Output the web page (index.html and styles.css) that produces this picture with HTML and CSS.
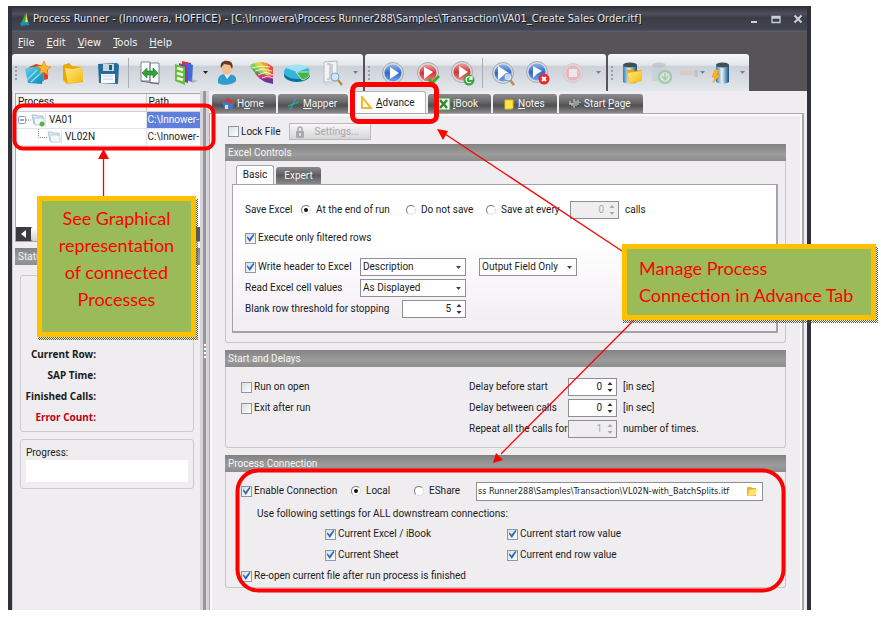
FILE: index.html
```html
<!DOCTYPE html>
<html lang="en">
<head>
<meta charset="utf-8">
<title>Process Runner</title>
<link rel="stylesheet" href="styles.css">
</head>
<body>
<svg class="defs" aria-hidden="true">
  <defs>
    <linearGradient id="blue" x1="0" y1="0" x2="0" y2="1"><stop offset="0" stop-color="#8fb4ea"/><stop offset=".5" stop-color="#2f68cf"/><stop offset="1" stop-color="#6fa4f0"/></linearGradient>
    <linearGradient id="red" x1="0" y1="0" x2="0" y2="1"><stop offset="0" stop-color="#eaa0a0"/><stop offset=".5" stop-color="#cf3636"/><stop offset="1" stop-color="#f08a8a"/></linearGradient>
    <linearGradient id="gold" x1="0" y1="0" x2="1" y2="1"><stop offset="0" stop-color="#ffe98a"/><stop offset="1" stop-color="#f5b800"/></linearGradient>
    <linearGradient id="cyan" x1="0" y1="0" x2="1" y2="1"><stop offset="0" stop-color="#5fd0ee"/><stop offset="1" stop-color="#0b86b8"/></linearGradient>
    <linearGradient id="steel" x1="0" y1="0" x2="1" y2="0"><stop offset="0" stop-color="#2d7fb5"/><stop offset=".45" stop-color="#e8f2f8"/><stop offset="1" stop-color="#0d4f86"/></linearGradient>
  </defs>
</svg>
<div class="window">
  <header class="titlebar">
    <svg class="logo" viewBox="0 0 12 16"><path d="M7 1 L9 11 L6 12Z" fill="#f1e22a"/><path d="M6 3 L6 12 L2 12Z" fill="#2aa35a"/><path d="M1 12 L10 11 L10 14 L2 15Z" fill="#1f86c8"/></svg>
    <h1>Process Runner - (Innowera, HOFFICE) - [C:\Innowera\Process Runner288\Samples\Transaction\VA01_Create Sales Order.itf]</h1>
    <div class="winbtns">
      <button type="button" aria-label="Minimize"><svg viewBox="0 0 10 10"><path d="M2 8H8" stroke="#c9d0dc" stroke-width="2"/></svg></button>
      <button type="button" aria-label="Restore"><svg viewBox="0 0 10 10"><path d="M1 2.500H9V8.500H1ZM1 4H9" stroke="#c9d0dc" stroke-width="1.300" fill="none"/></svg></button>
      <button type="button" aria-label="Close"><svg viewBox="0 0 10 10"><path d="M1.500 1.500 8.500 8.500M8.500 1.500 1.500 8.500" stroke="#c9d0dc" stroke-width="2"/></svg></button>
    </div>
  </header>
  <nav class="menubar">
    <a href="#"><u>F</u>ile</a><a href="#"><u>E</u>dit</a><a href="#"><u>V</u>iew</a><a href="#"><u>T</u>ools</a><a href="#"><u>H</u>elp</a>
  </nav>
  <div class="toolbars">
    <div class="toolbar files">
      <i class="grip"></i>
      <button type="button" aria-label="New"><svg viewBox="0 0 28 28"><path d="M5 8 12 5 24 8 24 20 12 23Z" fill="#d9412e"/><path d="M4 9 14 7 20 9 20 22 10 23Z" fill="#53b447"/><path d="M1 10 8 8 16 9 20 13 18 25 4 24Z" fill="url(#cyan)"/><path d="M3 21 13 11M7 23 18 13" stroke="#8fe0f2" stroke-width="1.200"/><path d="M20 2 22 7 27 8 23 11 24 16 20 13 15 15 17 10 13 7 18 7Z" fill="#ffb52e" stroke="#e98c12" stroke-width=".7"/></svg></button>
      <button type="button" aria-label="Open"><svg viewBox="0 0 28 28"><path d="M4 6 10 4 13 7 23 8 24 23 8 25 4 21Z" fill="#e9a900"/><path d="M6 9 14 10 23 8 24 22 9 25Z" fill="url(#gold)"/></svg></button>
      <button type="button" aria-label="Save"><svg viewBox="0 0 28 28"><path d="M4 5 23 4 25 6 24 25 5 24Z" fill="#236c9d"/><path d="M9 5H20V12H9Z" fill="#c9d6df"/><path d="M15 6H18V11H15Z" fill="#2a5878"/><path d="M7 15H21V24H7Z" fill="#f7f9fa"/><path d="M9 17H19M9 20H19" stroke="#bcd" stroke-width="1"/></svg></button>
      <i class="sep"></i>
      <button type="button" aria-label="Map"><svg viewBox="0 0 28 28"><path d="M5 3H14V22H5ZM14 4H23V24H14Z" fill="#fafbfc" stroke="#7e868c"/><path d="M5 22 23 25" stroke="#667"/><path d="M6 14 11 9V12H17V9L22 14 17 19V16H11V19Z" fill="#2fa538" stroke="#1b7d27" stroke-width=".6"/></svg></button>
      <button type="button" aria-label="Templates"><svg viewBox="0 0 28 28"><path d="M11 2 20 4 20 22 11 19Z" fill="#d63324"/><path d="M14 3 22 6 21 23 13 20Z" fill="#4568d8"/><path d="M8 4 17 7 17 24 8 21Z" fill="#8b3ab0"/><path d="M4 5 14 8 14 26 4 22Z" fill="#63c235"/><path d="M6 9 12 11M6 14 12 16M6 19 12 21" stroke="#f4fff0" stroke-width="2.500"/><path d="M20 20 27 22 21 24Z" fill="#8d959d" opacity=".6"/></svg></button>
      <i class="caret dark"></i>
      <button type="button" aria-label="User"><svg viewBox="0 0 28 28"><path d="M5 24C4 16 9 15 14 15 20 15 24 17 23 22 20 26 9 27 5 24Z" fill="#2f9ccb"/><path d="M11 15 14 20 18 15Z" fill="#e5f3f9"/><ellipse cx="14" cy="9" rx="5" ry="7" fill="#f2bd92"/><path d="M8 9C6 2 13 0 18 3 20 5 20 8 19 10L17 6 11 5Z" fill="#6b3a20"/></svg></button>
      <button type="button" aria-label="Colors"><svg viewBox="0 0 28 28"><path d="M2 6 6 4 25 22 21 24Z" fill="#8ccf4d"/><path d="M2 7 9 17 25 23Z" fill="#3fae49"/><path d="M6 4 13 3 25 22Z" fill="#ddd23a"/><path d="M13 3 19 4 25 22Z" fill="#f0a02c"/><path d="M19 4 25 8 25 22Z" fill="#e2523a"/><path d="M7 14 11 19 25 23 25 17Z" fill="#d63a7c"/><path d="M11 19 17 23 25 25 25 20Z" fill="#6f3596"/><path d="M4 9 13 7 22 8M7 12 15 10 24 12M10 16 18 13 25 16M14 19 20 17 25 19" stroke="#fff" fill="none" stroke-width=".8"/></svg></button>
      <button type="button" aria-label="Chart"><svg viewBox="0 0 28 28"><ellipse cx="14" cy="16" rx="13" ry="7" fill="#08729c"/><ellipse cx="14" cy="13" rx="13" ry="7" fill="#35b5dc"/><path d="M14 13 3 9C8 5 18 4 25 9Z" fill="#9fe2f4"/><path d="M13 13 27 13C27 17 24 20 19 21Z" fill="#46b63e" stroke="#d9f3e0" stroke-width=".8"/></svg></button>
      <button type="button" aria-label="Log"><svg viewBox="0 0 28 28"><path d="M6 3 19 2 19 22 6 23Z" fill="#f1f3f5" stroke="#b5bac0"/><path d="M9 5H12V20H9M14 5V20" stroke="#bfc5cb" stroke-width="1.500" fill="none"/><path d="M4 23 14 21 17 24 7 26Z" fill="#d3d7db"/><path d="M20 21 24 26" stroke="#c08a45" stroke-width="2.500"/><circle cx="17" cy="18" r="4" fill="#cfe7f6" stroke="#85a6bc"/></svg></button>
      <i class="caret last"></i>
    </div>
    <div class="toolbar run">
      <i class="grip"></i>
      <button type="button" aria-label="Run"><svg viewBox="0 0 28 28"><circle cx="14" cy="14" r="10.500" fill="#d7dade" stroke="#a7abb2"/><circle cx="14" cy="14" r="8.500" fill="url(#blue)"/><path d="M11 8 20 14 11 20Z" fill="#fff"/></svg></button>
      <button type="button" aria-label="Run and validate"><svg viewBox="0 0 28 28"><circle cx="14" cy="14" r="10.500" fill="#d7dade" stroke="#b3a7a9"/><circle cx="14" cy="14" r="8.500" fill="url(#red)"/><path d="M10 8 19 13 10 20Z" fill="#fff"/><path d="M15 20 18 24 25 17" stroke="#3cab28" stroke-width="3" fill="none"/></svg></button>
      <button type="button" aria-label="Run again"><svg viewBox="0 0 28 28"><circle cx="13" cy="13" r="10.500" fill="#d7dade" stroke="#b3a7a9"/><circle cx="13" cy="13" r="8.500" fill="url(#red)"/><path d="M10 7 19 13 10 19Z" fill="#fff"/><circle cx="20" cy="21" r="5.500" fill="#36a83c"/><path d="M23 20A3 3 0 1 0 22 23M23 17V20H20" stroke="#fff" stroke-width="1.300" fill="none"/></svg></button>
      <i class="sep"></i>
      <button type="button" aria-label="Debug"><svg viewBox="0 0 28 28"><circle cx="14" cy="14" r="10.500" fill="#d7dade" stroke="#a7abb2"/><circle cx="14" cy="14" r="8.500" fill="url(#blue)"/><path d="M9 7 20 14 15 16 9 21Z" fill="#fff"/><path d="M21 21 25 26" stroke="#c08a45" stroke-width="2.500"/><circle cx="19" cy="18" r="4" fill="#dceefa" fill-opacity=".8" stroke="#7c98b4"/></svg></button>
      <button type="button" aria-label="Stop debug"><svg viewBox="0 0 28 28"><circle cx="13" cy="13" r="10.500" fill="#d7dade" stroke="#a7abb2"/><circle cx="13" cy="13" r="8.500" fill="url(#blue)"/><path d="M9 7 18 12 13 15 9 19Z" fill="#fff"/><circle cx="20" cy="20" r="5.500" fill="#dd2f2f"/><path d="M18 18 22 22M22 18 18 22" stroke="#fff" stroke-width="2"/></svg></button>
      <button type="button" aria-label="Stop" disabled><svg viewBox="0 0 28 28"><circle cx="14" cy="14" r="9.500" fill="#e6d3d8" stroke="#d3c6cd"/><circle cx="14" cy="14" r="7.500" fill="#e3b9bf"/><path d="M10 10H18V18H10Z" fill="#eee6ea"/></svg></button>
      <i class="caret last"></i>
    </div>
    <div class="toolbar data">
      <i class="grip"></i>
      <button type="button" aria-label="Open data"><svg viewBox="0 0 28 28"><path d="M4 6V23C7 25 15 25 18 23V6Z" fill="url(#steel)"/><ellipse cx="11" cy="6" rx="7" ry="2.500" fill="#3f4e59"/><path d="M8 11 13 10 15 12 23 11 23 21 10 25Z" fill="#e9a900"/><path d="M9 14 23 12 23 22 10 25Z" fill="url(#gold)"/></svg></button>
      <button type="button" aria-label="Refresh data" disabled><svg viewBox="0 0 28 28" opacity=".55"><path d="M4 6V22H14V6Z" fill="#c4cbd1"/><ellipse cx="11" cy="6" rx="7" ry="2.500" fill="#aeb7be"/><circle cx="17" cy="18" r="6" fill="#e4efe4" stroke="#7cc088" stroke-width="2.500"/><path d="M17 14V20M14 17 17 21 20 17" stroke="#7cc088" stroke-width="1.500" fill="none"/></svg></button>
      <button type="button" aria-label="Link data" disabled><svg viewBox="0 0 28 28" opacity=".6"><path d="M3 12H16V16H3Z" fill="#e0c3b0"/><path d="M17 11H21V18H17Z" fill="#b5bbc1"/></svg></button>
      <i class="caret tight"></i>
      <button type="button" aria-label="Execute data"><svg viewBox="0 0 28 28"><path d="M8 6V23C11 25 18 25 21 23V6Z" fill="url(#steel)"/><ellipse cx="14.500" cy="6" rx="6.500" ry="2.500" fill="#3f4e59"/><path d="M7 11 4 18H7L5 24 12 16H9L11 11Z" fill="#ffb619" stroke="#ef9313" stroke-width=".6"/></svg></button>
      <i class="caret last"></i>
    </div>
  </div>
  <div class="main">
    <aside class="side">
      <div class="tree">
        <table>
          <thead><tr><th class="proc">Process</th><th>Path</th></tr></thead>
          <tbody>
            <tr><td><div class="node"><svg class="branch" viewBox="0 0 13 16"><rect x=".5" y="4.500" width="7" height="7" rx="1" fill="#fff" stroke="#7f95c4"/><path d="M2 8H6" stroke="#38508c"/><path d="M8 8H13" stroke="#888" stroke-dasharray="1 1"/></svg><svg class="folder" viewBox="0 0 14 16"><path d="M1 3H5L6 4H12V12H3Z" fill="#dbe9ef" stroke="#a5bcc8"/><path d="M3 6H13V13H4Z" fill="#f2f8fa" stroke="#9fb8c4" stroke-width=".7"/><circle cx="11" cy="12" r="2.500" fill="#55b548"/></svg><span>VA01</span></div></td><td class="sel">C:\Innower-</td></tr>
            <tr><td><div class="node child"><svg class="branch" viewBox="0 0 13 16"><path d="M4.500 0V8.500H13" stroke="#888" fill="none" stroke-dasharray="1 1"/></svg><svg class="folder" viewBox="0 0 14 16"><path d="M1 3H5L6 4H12V12H3Z" fill="#dbe9ef" stroke="#b5c8d2"/><path d="M3 6H13V13H4Z" fill="#f2f8fa" stroke="#afc4ce" stroke-width=".7"/></svg><span>VL02N</span></div></td><td>C:\Innower-</td></tr>
          </tbody>
        </table>
        <div class="hscroll"><button type="button" aria-label="Scroll left"><svg viewBox="0 0 8 8"><path d="M6 0V8L1 4Z" fill="#fff"/></svg></button><i></i></div>
      </div>
      <h2 class="bar">Status</h2>
      <div class="status">
        <dl><dt>Current Row:</dt><dt>SAP Time:</dt><dt>Finished Calls:</dt><dt class="err">Error Count:</dt></dl>
      </div>
      <div class="progress"><label for="prog">Progress:</label><progress id="prog" value="0" max="100"></progress></div>
    </aside>
    <div class="splitter"><i></i></div>
    <section class="work">
      <nav class="tabs">
        <button type="button" class="home"><svg viewBox="0 0 14 14"><path d="M1 6 6 1 13 6 11 12 4 12Z" fill="#3f79c9"/><path d="M1 6 7 1 13 5 9 7 5 4Z" fill="#d8382c"/><path d="M4 8H7V12H4Z" fill="#f3d9b0"/></svg><span>H<u>o</u>me</span></button>
        <button type="button" class="mapper"><svg viewBox="0 0 14 14"><path d="M1 9 12 5" stroke="#2bb04b" stroke-width="1.500"/><path d="M3 13 9 1" stroke="#3b8fd8" stroke-width="1.500"/></svg><span><u>M</u>apper</span></button>
        <button type="button" class="advance on"><svg viewBox="0 0 14 14"><path d="M2 1V12H11Z" fill="none" stroke="#f0b92c" stroke-width="2"/></svg><span><u>A</u>dvance</span></button>
        <button type="button" class="ibook"><svg viewBox="0 0 14 14"><path d="M1 1H13V13H1Z" fill="#f0f7ee" stroke="#4d9a48"/><path d="M3 3 10 11M10 3 3 11" stroke="#2f8a35" stroke-width="2.500"/></svg><span><u>i</u>Book</span></button>
        <button type="button" class="notes"><svg viewBox="0 0 14 14"><path d="M3 3H11V11L9 12H3Z" fill="#ffe34a" stroke="#e6bf1c"/></svg><span><u>N</u>otes</span></button>
        <button type="button" class="start"><svg viewBox="0 0 14 14"><path d="M2 4V7M4 6V9M6 2V11M8 4V9M10 3V8M12 5V6M1 7H5" stroke="#d6d6d6" stroke-width="1" fill="none"/></svg><span>Start <u>P</u>age</span></button>
      </nav>
      <div class="page">
        <div class="lockrow">
          <label class="check"><input type="checkbox">Lock File</label>
          <button type="button" class="settings" disabled><svg viewBox="0 0 10 14"><path d="M3 6V4A2 2 0 0 1 7 4V6" fill="none" stroke="#aaa" stroke-width="1.500"/><rect x="1" y="6" width="8" height="7" rx="1" fill="#aaa"/><path d="M5 8V11" stroke="#eee" stroke-width="1.500"/></svg>Settings...</button>
        </div>
        <section class="group">
          <h2 class="bar">Excel Controls</h2>
          <div class="excel">
            <nav class="subtabs"><button type="button" class="on">Basic</button><button type="button">Expert</button></nav>
            <div class="pane">
              <div class="row saverow">
                <span class="cap">Save Excel</span>
                <label class="check atend"><input type="radio" name="save" checked>At the end of run</label>
                <label class="check nosave"><input type="radio" name="save">Do not save</label>
                <label class="check every"><input type="radio" name="save">Save at every</label>
                <div class="spin off"><input type="text" value="0" aria-label="Calls between saves" disabled><svg viewBox="0 0 8 14"><path d="M1.500 5 4 2 6.500 5ZM1.500 9 4 12 6.500 9Z"/></svg></div>
                <span class="unit">calls</span>
              </div>
              <div class="row execrow"><label class="check"><input type="checkbox" checked>Execute only filtered rows</label></div>
              <div class="row formrow">
                <label class="check lead"><input type="checkbox" checked>Write header to Excel</label>
                <select class="field" aria-label="Header content"><option>Description</option></select>
                <select class="output" aria-label="Header fields"><option>Output Field Only</option></select>
              </div>
              <div class="row formrow"><label class="lead" for="readas">Read Excel cell values</label><select id="readas" class="field"><option>As Displayed</option></select></div>
              <div class="row formrow"><label class="lead blank" for="blank">Blank row threshold for stopping</label><div class="spin wide"><input id="blank" type="text" value="5"><svg viewBox="0 0 8 14"><path d="M1.500 5 4 2 6.500 5ZM1.500 9 4 12 6.500 9Z"/></svg></div></div>
            </div>
          </div>
        </section>
        <section class="group">
          <h2 class="bar">Start and Delays</h2>
          <div class="delays">
            <div class="opts">
              <label class="check"><input type="checkbox">Run on open</label>
              <label class="check"><input type="checkbox">Exit after run</label>
            </div>
            <div class="times">
              <label for="d1">Delay before start</label><div class="spin"><input id="d1" type="text" value="0"><svg viewBox="0 0 8 14"><path d="M1.500 5 4 2 6.500 5ZM1.500 9 4 12 6.500 9Z"/></svg></div><span>[in sec]</span>
              <label for="d2">Delay between calls</label><div class="spin"><input id="d2" type="text" value="0"><svg viewBox="0 0 8 14"><path d="M1.500 5 4 2 6.500 5ZM1.500 9 4 12 6.500 9Z"/></svg></div><span>[in sec]</span>
              <label for="d3">Repeat all the calls for</label><div class="spin off"><input id="d3" type="text" value="1" disabled><svg viewBox="0 0 8 14"><path d="M1.500 5 4 2 6.500 5ZM1.500 9 4 12 6.500 9Z"/></svg></div><span>number of times.</span>
            </div>
          </div>
        </section>
        <section class="group">
          <h2 class="bar">Process Connection</h2>
          <div class="conn">
            <div class="row connrow">
              <label class="check enable"><input type="checkbox" checked>Enable Connection</label>
              <label class="check local"><input type="radio" name="where" checked>Local</label>
              <label class="check eshare"><input type="radio" name="where">EShare</label>
              <div class="path"><input type="text" aria-label="Connected file" value="ss Runner288\Samples\Transaction\VL02N-with_BatchSplits.itf"><button type="button" aria-label="Browse"><svg viewBox="0 0 12 12"><path d="M1 2H5L6 3H10V11H1Z" fill="#e9b322"/><path d="M3 5 11 4 10 10 2 11Z" fill="#ffe27a"/></svg></button></div>
            </div>
            <p>Use following settings for ALL downstream connections:</p>
            <div class="grid2">
              <label class="check"><input type="checkbox" checked>Current Excel / iBook</label>
              <label class="check"><input type="checkbox" checked>Current start row value</label>
              <label class="check"><input type="checkbox" checked>Current Sheet</label>
              <label class="check"><input type="checkbox" checked>Current end row value</label>
            </div>
            <label class="check reopen"><input type="checkbox" checked>Re-open current file after run process is finished</label>
          </div>
        </section>
      </div>
    </section>
  </div>
</div>
<svg class="marks" viewBox="0 0 881 617" aria-hidden="true">
  <g fill="none" stroke="#f00">
    <rect x="14.500" y="105.500" width="199" height="43" rx="8" stroke-width="4"/>
    <rect x="352.500" y="84.500" width="84" height="37" rx="6" stroke-width="5"/>
    <rect x="237.500" y="470.500" width="546" height="120" rx="21" stroke-width="4"/>
    <path d="M103.500 197V158M622 251 445 134M634 320 501 454" stroke-width="1.300"/>
  </g>
  <path d="M103.500 149 109 159H98ZM437 129 448 131 443 140ZM493 463 496 453 503 460Z" fill="#f00"/>
</svg>
<aside class="note graph">See Graphical<br>representation<br>of connected<br>Processes</aside>
<aside class="note manage">Manage Process<br>Connection in Advance Tab</aside>
</body>
</html>
```
FILE: styles.css
```css
* { box-sizing: border-box; }
body {
  margin: 0;
  position: relative;
  background: #fff;
  color: #1c1c1c;
  font: 10px/14px Roboto, "Liberation Sans", sans-serif;
}
button, input, select { font: inherit; color: inherit; margin: 0; padding: 0; }
button { border: 0; background: none; }
h1, h2, p, dl { margin: 0; font-weight: normal; font-size: inherit; }
.defs { position: absolute; width: 0; height: 0; }

.window {
  display: flex;
  flex-direction: column;
  min-height: calc(100vh - 13px);
  margin: 6px 70px 7px 8px;
  border: solid #30313b;
  border-width: 0 4px;
  background: #565458;
}
.titlebar {
  display: flex;
  align-items: center;
  height: 26px;
  padding: 0 4px 0 7px;
  background: linear-gradient(#2e3038, #4c505b 30%, #3a3c46 45%, #42454f 90%, #5c6078);
  color: #e6e6ea;
}
.logo { width: 12px; height: 16px; margin-right: 2px; }
.titlebar h1 { flex: 1; white-space: nowrap; font: 11px/16px "DejaVu Sans Condensed", sans-serif; text-shadow: 1px 1px #15161c; }
.winbtns { display: flex; gap: 12px; }
.winbtns button { width: 10px; height: 10px; }
.winbtns svg { display: block; }
.menubar { display: flex; gap: 12px; height: 22px; padding: 3px 6px; }
.menubar a { color: #f1f1f1; text-decoration: none; font: 11px/16px "DejaVu Sans Condensed", sans-serif; }

.toolbars { display: flex; gap: 2px; height: 37px; }
.toolbar {
  display: flex;
  align-items: center;
  border-radius: 3px 3px 0 0;
  background: linear-gradient(#f8f8fa, #e2e5ea 30%, #ccd1d8 34%, #d6dae0 60%, #e2e7ec);
}
.toolbar button { flex: none; width: 35px; height: 28px; display: grid; place-items: center; }
.toolbar svg { width: 28px; height: 28px; }
.toolbar .grip { width: 2px; height: 14px; margin: 0 5px 0 3px; background: repeating-linear-gradient(#9aa0a8 0 2px, transparent 2px 4px); }
.sep { width: 1px; height: 30px; margin: 0 3px; background: #a9b0b9; }
.run .sep { margin: 0 2px; }
.caret { width: 5px; height: 3px; margin: 0 1px; background: #7b808a; clip-path: polygon(0 0, 100% 0, 50% 100%); }
.caret.dark { background: #222; }
.files .grip { margin-right: 3px; }
.files .last { margin: 0 5px 0 4px; }
.run .last { margin: 0 5px 0 6px; }
.data button { width: 29px; }
.data .last { margin: 0 4px; }
.data .tight { margin: 0 2px 0 -5px; }

.main { flex: 1; display: flex; background: #efedf0; }
.side { width: 188px; flex: none; padding: 2px 0 0 2px; border-left: 1px solid #cfccd2; }
.tree { height: 149px; display: flex; flex-direction: column; border: 1px solid #a8a8ac; border-right: 0; background: #fff; }
.tree table { width: 100%; table-layout: fixed; border-collapse: collapse; }
.tree th { height: 17px; padding: 0 2px; font-weight: normal; text-align: left; background: #f5f4f6; border: solid #d0ced2; border-width: 0 0 1px 1px; }
.tree .proc { width: 130px; border-left: 0; }
.tree td { height: 17px; padding: 0; border: solid #dfe4ee; border-width: 0 0 1px 1px; white-space: nowrap; }
.tree td:first-child { border-left: 0; padding-left: 2px; }
.tree td + td { padding-left: 1px; }
.tree .sel { background: #5f7fdc; color: #fff; }
.node { display: flex; align-items: center; }
.node.child { padding-left: 16px; }
.branch { width: 13px; height: 16px; }
.folder { width: 14px; height: 16px; }
.node span { padding-left: 3px; border-left: 1px solid #dfe4ee; }
.hscroll { display: flex; height: 14px; margin-top: auto; background: #58585c; }
.hscroll button { width: 15px; background: #3b3b40; display: grid; place-items: center; }
.hscroll svg { width: 8px; height: 8px; }
.hscroll i { width: 130px; background: linear-gradient(#fff, #d2d2d6); border-radius: 2px; }
.bar { height: 17px; padding: 0 3px; background: linear-gradient(#828282, #9c9c9c 60%, #8c8c8c); color: #f4f4f4; line-height: 17px; }
.side .bar { margin-top: 6px; }
.status { height: 157px; margin: 10px 6px 0 5px; padding-top: 68px; border: 1px solid #cbc9ce; border-radius: 3px; }
.status dl { width: 75px; font: bold 10px/21px "Noto Sans", sans-serif; white-space: nowrap; }
.status dt { display: flex; justify-content: flex-end; }
.err { color: #c00010; }
.progress { display: flex; flex-direction: column; margin: 7px 6px 0 5px; padding: 6px 5px; border: 1px solid #cbc9ce; border-radius: 3px; }
progress { appearance: none; width: 100%; height: 22px; border: 0; background: #fff; }
progress::-webkit-progress-bar { background: #fff; }
.splitter { width: 9px; flex: none; display: grid; place-items: center; background: linear-gradient(90deg, #d6d4d8 0 3px, #98979b 3px 6px, #d6d4d8 6px); }
.splitter i { width: 2px; height: 14px; background: repeating-linear-gradient(#fff 0 2px, transparent 2px 4px); }

.work { flex: 1; min-width: 0; display: flex; flex-direction: column; }
.tabs { display: flex; align-items: flex-end; gap: 2px; height: 22px; padding-left: 3px; }
.tabs button {
  display: flex;
  align-items: center;
  gap: 2px;
  height: 19px;
  padding: 0 6px 0 9px;
  border-radius: 3px 3px 0 0;
  background: linear-gradient(#8b8b8b, #6a6a6c 40%, #4f4f52 60%, #8a8a8c);
  color: #f5f5f5;
  white-space: nowrap;
}
.tabs svg { width: 14px; height: 14px; flex: none; }
.tabs .on { height: 22px; background: #fff; color: #222; border: 1px solid #b5b3b8; border-bottom: 0; }
.home { width: 64px; }
.mapper { width: 70px; }
.advance { width: 76px; }
.ibook { width: 63px; }
.notes { width: 64px; }
.start { width: 84px; }
.page { flex: 1; margin: 0 3px 0 0; padding: 9px 16px 0 15px; border: 1px solid #aaa8ac; border-width: 1px 2px 0 1px; box-shadow: inset 2px 2px #fafafa, inset -2px 0 #fafafa; display: flex; flex-direction: column; gap: 7px; }
.lockrow { display: flex; align-items: center; height: 17px; gap: 8px; padding-left: 3px; margin-bottom: -3px; }
.settings { display: flex; align-items: center; gap: 10px; width: 82px; height: 17px; padding-left: 5px; border: 1px solid #bab8bc; background: linear-gradient(#f7f7f7, #d6d4d8); color: #a8a6aa; }
.settings svg { width: 10px; height: 14px; }

.check { display: flex; align-items: center; gap: 2px; white-space: nowrap; }
.check input { appearance: none; flex: none; width: 11px; height: 11px; border: 1px solid #8b98a8; background: linear-gradient(135deg, #dcdcdc, #fff); display: grid; place-items: center; }
.check input[type="checkbox"]:checked::before { content: ""; width: 8px; height: 8px; background: #2468c0; clip-path: polygon(0 40%, 15% 30%, 38% 60%, 85% 0, 100% 10%, 42% 100%); }
.check input[type="radio"] { width: 10px; height: 10px; border-radius: 50%; border-color: #777 #ddd #ddd #777; background: #fff; }
.check input[type="radio"]:checked::before { content: ""; width: 4px; height: 4px; border-radius: 50%; background: #111; }

.group { border: 1px solid #c9c7cc; border-top: 0; border-radius: 0 0 3px 3px; }
.group > .bar { margin: 0 -1px; }
.excel { padding: 4px 7px 9px 6px; }
.subtabs { display: flex; align-items: flex-end; gap: 2px; height: 19px; padding-left: 4px; }
.subtabs button { height: 17px; width: 45px; border-radius: 3px 3px 0 0; background: linear-gradient(#8b8b8b, #5c5c5e 50%, #8a8a8c); color: #f5f5f5; }
.subtabs .on { height: 19px; width: 38px; background: #fff; color: #222; border: 1px solid #a5a3a8; border-bottom: 0; }
.pane { height: 149px; padding: 16px 10px 0 12px; border: 1px solid #a5a3a8; border-width: 1px 2px 2px 1px; background: linear-gradient(#fff 40%, #f2ecf3); }
.row { display: flex; align-items: center; }
.saverow { height: 17px; }
.cap { width: 56px; }
.saverow .check, .connrow .check { gap: 5px; }
.saverow .atend { width: 105px; }
.saverow .nosave { width: 80px; }
.saverow .every { width: 84px; }
.unit { margin-left: 6px; }
.execrow { height: 14px; margin: 13px 0; }
.formrow { height: 18px; margin-bottom: 3px; }
.lead { width: 115px; white-space: nowrap; }
.blank { width: 157px; }
select { appearance: none; height: 18px; padding: 0 14px 0 2px; border: 1px solid #8f8f93; border-radius: 0; background: #fff url("data:image/svg+xml,%3Csvg xmlns='http://www.w3.org/2000/svg' width='5' height='3'%3E%3Cpath d='M0 0H5L2.500 3Z' fill='%23444'/%3E%3C/svg%3E") no-repeat right 4px center; }
.field { width: 106px; }
.output { width: 98px; margin-left: 13px; }
.spin { display: flex; align-items: center; width: 49px; height: 18px; padding-right: 2px; border: 1px solid #8f8f93; background: #fff; }
.spin.wide { width: 64px; }
.spin input { flex: 1; min-width: 0; width: 20px; border: 0; background: none; text-align: right; padding-right: 4px; }
.spin svg { width: 8px; height: 14px; fill: #333; }
.spin.off { background: #efedf0; color: #aaa; }
.spin.off svg { fill: #aaa; }
.delays { display: flex; padding: 11px 14px 9px; }
.opts { width: 229px; display: flex; flex-direction: column; gap: 7px; padding: 2px 0 0 1px; }
.times { display: grid; grid-template-columns: 99px 49px auto; row-gap: 3px; align-items: center; white-space: nowrap; }
.times span { padding-left: 6px; }
.conn { padding: 9px 14px 4px 15px; }
.connrow { height: 20px; }
.enable { width: 110px; }
.connrow .enable { gap: 2px; }
.local { width: 63px; }
.eshare { width: 63px; }
.path { display: flex; align-items: center; width: 287px; height: 19px; margin-left: -1px; padding: 0 4px 0 1px; border: 1px solid #8f8f93; background: #fff; }
.path input { flex: 1; min-width: 0; border: 0; background: none; font: 9px/14px "DejaVu Sans Condensed", sans-serif; }
.path button { width: 12px; height: 12px; }
.path svg { display: block; }
.conn p { padding: 6px 0 6px 16px; }
.grid2 { display: grid; grid-template-columns: 182px auto; row-gap: 7px; padding-left: 84px; }
.reopen { margin-top: 7px; }

.marks { position: absolute; left: 0; top: 0; width: 881px; height: 617px; pointer-events: none; }
.note {
  position: absolute;
  border: 5px solid #ffc000;
  background: #9bbb59;
  color: #f00;
  font: 18px/27px Lato, "Open Sans", sans-serif;
}
.note::after {
  content: "";
  position: absolute;
  inset: -2px -7px -8px -4px;
  background: repeating-conic-gradient(#4f6228 0 25%, transparent 0 50%) 0 0 / 2px 2px;
  clip-path: polygon(100% 0, 100% 100%, 0 100%, 0 calc(100% - 3px), calc(100% - 2px) calc(100% - 3px), calc(100% - 2px) 0);
}
.graph { left: 37px; top: 196px; width: 159px; height: 141px; padding-top: 4px; text-align: center; }
.manage { left: 622px; top: 244px; width: 254px; height: 76px; padding: 6px 0 0 12px; white-space: nowrap; }
```
